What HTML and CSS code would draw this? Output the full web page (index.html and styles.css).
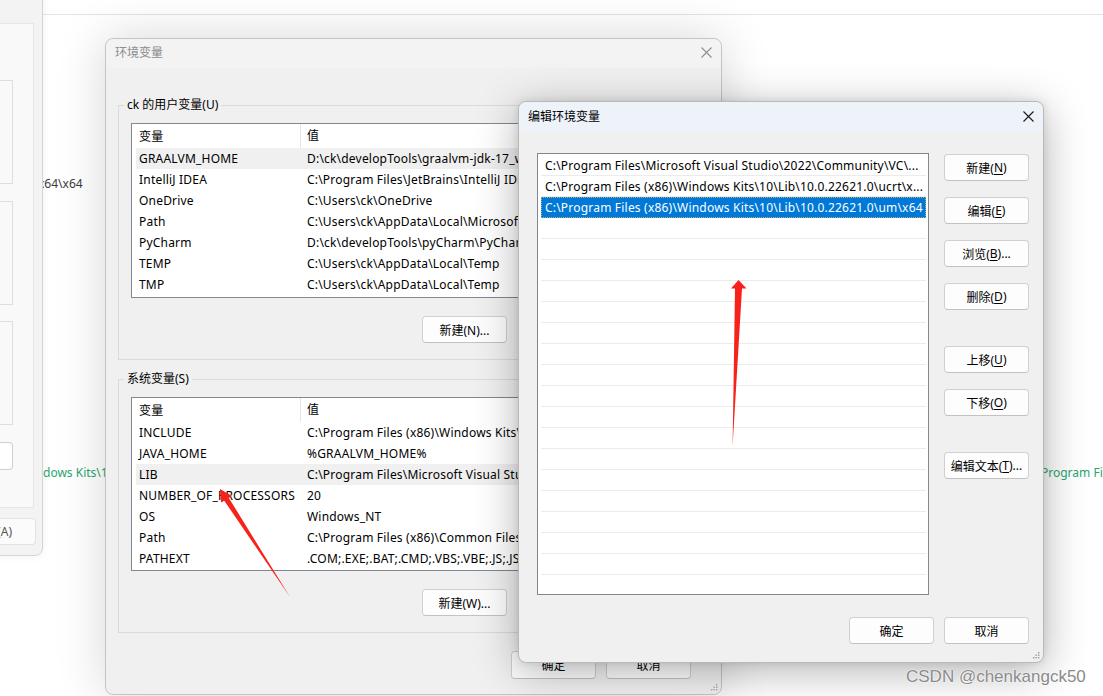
FILE: index.html
```html
<!DOCTYPE html>
<html lang="zh-CN">
<head>
<meta charset="utf-8">
<title>编辑环境变量</title>
<link rel="stylesheet" href="styles.css">
</head>
<body>
<div class="desk">
  <div class="topstrip"></div>
  <span class="bgtext t1">x64\x64</span>
  <span class="bgtext green t2">dows Kits\10.0</span>
  <span class="bgtext green t3">Program Files (x86)</span>

  <div class="win win-left">
    <div class="lw-panel">
      <div class="lw-box"></div>
      <div class="lw-box b2"></div>
      <div class="lw-box b3"></div>
      <div class="lw-btn"></div>
    </div>
    <div class="lw-btn2">(A)</div>
  </div>

  <div class="win win-env">
    <div class="env-title">
      <span>环境变量</span>
      <svg class="xicon" width="11" height="11" viewBox="0 0 11 11"><path d="M0.5 0.5L10.5 10.5M10.5 0.5L0.5 10.5" stroke="#8f8f8f" stroke-width="1.1" fill="none"/></svg>
    </div>
    <div class="env-body">
      <fieldset class="group g1">
        <legend>ck 的用户变量(U)</legend>
        <div class="vlist">
          <div class="vrow head"><span class="c1">变量</span><span class="c2">值</span></div>
          <div class="vrow hl"><span class="c1">GRAALVM_HOME</span><span class="c2">D:\ck\developTools\graalvm-jdk-17_windows-x64_bin\graalvm-jdk-17.0.7+8.1</span></div>
          <div class="vrow"><span class="c1">IntelliJ IDEA</span><span class="c2">C:\Program Files\JetBrains\IntelliJ IDEA 2023.1\bin;</span></div>
          <div class="vrow"><span class="c1">OneDrive</span><span class="c2">C:\Users\ck\OneDrive</span></div>
          <div class="vrow"><span class="c1">Path</span><span class="c2">C:\Users\ck\AppData\Local\Microsoft\WindowsApps;</span></div>
          <div class="vrow"><span class="c1">PyCharm</span><span class="c2">D:\ck\developTools\pyCharm\PyCharm 2023.1\bin;</span></div>
          <div class="vrow"><span class="c1">TEMP</span><span class="c2">C:\Users\ck\AppData\Local\Temp</span></div>
          <div class="vrow"><span class="c1">TMP</span><span class="c2">C:\Users\ck\AppData\Local\Temp</span></div>
        </div>
        <div class="btnrow">
          <button class="btn">新建(N)...</button>
          <button class="btn">编辑(E)...</button>
          <button class="btn">删除(D)</button>
        </div>
      </fieldset>
      <fieldset class="group g2">
        <legend>系统变量(S)</legend>
        <div class="vlist">
          <div class="vrow head"><span class="c1">变量</span><span class="c2">值</span></div>
          <div class="vrow"><span class="c1">INCLUDE</span><span class="c2">C:\Program Files (x86)\Windows Kits\10\Include\10.0.22621.0\ucrt</span></div>
          <div class="vrow"><span class="c1">JAVA_HOME</span><span class="c2">%GRAALVM_HOME%</span></div>
          <div class="vrow hl"><span class="c1">LIB</span><span class="c2">C:\Program Files\Microsoft Visual Studio\2022\Community\VC</span></div>
          <div class="vrow"><span class="c1">NUMBER_OF_PROCESSORS</span><span class="c2">20</span></div>
          <div class="vrow"><span class="c1">OS</span><span class="c2">Windows_NT</span></div>
          <div class="vrow"><span class="c1">Path</span><span class="c2">C:\Program Files (x86)\Common Files\Oracle\Java\javapath;</span></div>
          <div class="vrow"><span class="c1">PATHEXT</span><span class="c2">.COM;.EXE;.BAT;.CMD;.VBS;.VBE;.JS;.JSE;.WSF;.WSH;.MSC</span></div>
        </div>
        <div class="btnrow">
          <button class="btn">新建(W)...</button>
          <button class="btn">编辑(I)...</button>
          <button class="btn">删除(L)</button>
        </div>
      </fieldset>
      <div class="okrow">
        <button class="btn">确定</button>
        <button class="btn">取消</button>
      </div>
    </div>
    <svg class="grip" width="7" height="7" viewBox="0 0 7 7"><g fill="#a8a8a8"><rect x="5" y="0" width="1.4" height="1.4"/><rect x="2.5" y="2.5" width="1.4" height="1.4"/><rect x="5" y="2.5" width="1.4" height="1.4"/><rect x="0" y="5" width="1.4" height="1.4"/><rect x="2.5" y="5" width="1.4" height="1.4"/><rect x="5" y="5" width="1.4" height="1.4"/></g></svg>
  </div>

  <div class="win win-edit">
    <div class="edit-title">
      <span>编辑环境变量</span>
      <svg class="xicon" width="11" height="11" viewBox="0 0 11 11"><path d="M0.5 0.5L10.5 10.5M10.5 0.5L0.5 10.5" stroke="#1a1a1a" stroke-width="1.1" fill="none"/></svg>
    </div>
    <div class="edit-body">
      <div class="edit-main">
        <div class="plist">
          <div class="prow">C:\Program Files\Microsoft Visual Studio\2022\Community\VC\...</div>
          <div class="prow">C:\Program Files (x86)\Windows Kits\10\Lib\10.0.22621.0\ucrt\x...</div>
          <div class="prow sel">C:\Program Files (x86)\Windows Kits\10\Lib\10.0.22621.0\um\x64</div>
          <div class="prow"></div><div class="prow"></div><div class="prow"></div>
          <div class="prow"></div><div class="prow"></div><div class="prow"></div>
          <div class="prow"></div><div class="prow"></div><div class="prow"></div>
          <div class="prow"></div><div class="prow"></div><div class="prow"></div>
          <div class="prow"></div><div class="prow"></div><div class="prow"></div>
          <div class="prow"></div><div class="prow"></div><div class="prow"></div>
        </div>
        <div class="sidebtns">
          <button class="btn">新建(<u>N</u>)</button>
          <button class="btn">编辑(<u>E</u>)</button>
          <button class="btn">浏览(<u>B</u>)...</button>
          <button class="btn">删除(<u>D</u>)</button>
          <button class="btn sp">上移(<u>U</u>)</button>
          <button class="btn">下移(<u>O</u>)</button>
          <button class="btn sp">编辑文本(<u>T</u>)...</button>
        </div>
      </div>
      <div class="okrow2">
        <button class="btn">确定</button>
        <button class="btn">取消</button>
      </div>
    </div>
    <svg class="grip" width="7" height="7" viewBox="0 0 7 7"><g fill="#9a9a9a"><rect x="5" y="0" width="1.4" height="1.4"/><rect x="2.5" y="2.5" width="1.4" height="1.4"/><rect x="5" y="2.5" width="1.4" height="1.4"/><rect x="0" y="5" width="1.4" height="1.4"/><rect x="2.5" y="5" width="1.4" height="1.4"/><rect x="5" y="5" width="1.4" height="1.4"/></g></svg>
  </div>

  <svg class="arrows" width="1103" height="696" viewBox="0 0 1103 696">
    <polygon points="220,489 232,496 228.8,497.9 290,597 224.3,500.7 221,502.6" fill="#f7231a"/>
    <polygon points="738.5,280 746.5,288.5 742,288.5 732.6,446 735,288.5 731,288.5" fill="#f7231a"/>
  </svg>

  <div class="watermark">CSDN @chenkangck50</div>
</div>
</body>
</html>
```
FILE: styles.css
```css
* { box-sizing: border-box; }
html, body { margin: 0; padding: 0; }
body {
  width: 1103px;
  height: 696px;
  overflow: hidden;
  background: #ffffff;
  font-family: "Noto Sans", "Noto Sans CJK SC", sans-serif;
  font-size: 12px;
  letter-spacing: 0.2px;
  color: #000;
}
.desk { position: relative; width: 1103px; height: 696px; overflow: hidden; }

.topstrip {
  position: absolute; left: 0; top: 0; width: 1103px; height: 15px;
  border-bottom: 1px solid #e3e3e3; background: #fff;
}

.bgtext { position: absolute; font-size: 12px; line-height: 16px; color: #3c3c3c; white-space: nowrap; letter-spacing: 0; }
.bgtext.green { color: #2aa56f; }
.t1 { left: 38px; top: 176px; }
.t2 { left: 43px; top: 465px; }
.t3 { left: 1041px; top: 465px; }

.win { position: absolute; }

/* left background window */
.win-left {
  left: -12px; top: -12px; width: 55px; height: 568px;
  background: #f3f3f3;
  border: 1px solid #d4d4d4;
  border-radius: 0 0 8px 0;
  box-shadow: 0 0 10px rgba(0,0,0,0.06);
  display: flex; flex-direction: column;
  padding-top: 34px;
}
.lw-panel {
  width: 45px; height: 485px;
  background: #f9f9f9;
  border: 1px solid #e6e6e6;
  border-left: none;
  display: flex; flex-direction: column;
  padding-top: 56px;
}
.lw-box { width: 24px; height: 104px; border: 1px solid #dedede; border-left: none; background: #f9f9f9; }
.lw-box.b2 { margin-top: 17px; }
.lw-box.b3 { margin-top: 16px; }
.lw-btn { width: 24px; height: 28px; margin-top: 17px; background: #fff; border: 1px solid #d0d0d0; border-left: none; border-radius: 0 4px 4px 0; }
.lw-btn2 {
  width: 47px; height: 27px; margin-top: 10px;
  background: #fbfbfb; border: 1px solid #e2e2e2; border-left: none; border-radius: 0 4px 4px 0;
  display: flex; align-items: center; justify-content: flex-end; padding-right: 23px;
  color: #555; font-size: 12px; letter-spacing: 0;
}

/* environment window */
.win-env {
  left: 105px; top: 38px; width: 617px; height: 657px;
  background: #f0f0f0;
  border: 1px solid #c4c4c4;
  border-radius: 8px;
  box-shadow: 0 0 50px rgba(0,0,0,0.16);
  display: flex; flex-direction: column;
}
.env-title {
  height: 29px; flex: none;
  background: #f3f3f3;
  border-radius: 8px 8px 0 0;
  display: flex; align-items: center; justify-content: space-between;
  padding: 0 9px 3px 9px;
  color: #8c8c8c;
  letter-spacing: 0;
}
.env-body { padding: 28px 12px 0 12px; display: flex; flex-direction: column; }

.group {
  margin: 0; padding: 9px 12px 16px 12px;
  border: 1px solid #dadada;
  min-width: 0;
}
.group legend { padding: 0 3px; margin-left: -7px; line-height: 18px; font-size: 12px; letter-spacing: 0; }
.group.g2 { margin-top: 10px; }

.vlist {
  background: #fff;
  border: 1px solid #828790;
  height: 175px;
  overflow: hidden;
  padding-left: 4px;
}
.g2 .vlist { height: 174px; }
.vrow { display: flex; align-items: center; height: 21px; white-space: nowrap; }
.vrow.head { height: 24px; }
.vrow.hl { background: #f0f0f0; }
.vrow .c1 { width: 164px; flex: none; padding-left: 3px; overflow: hidden; }
.vrow .c2 { padding-left: 7px; flex: 1; overflow: hidden; }
.vrow.head .c2 { border-left: 1px solid #e5e5e5; height: 24px; line-height: 24px; padding-left: 6px; }

.btnrow { display: flex; justify-content: flex-end; gap: 12px; margin-top: 18px; margin-right: -5px; }

.btn {
  width: 85px; height: 27px; padding: 0;
  font-family: inherit; font-size: 12px; color: #000;
  letter-spacing: 0;
  background: #fdfdfd;
  border: 1px solid #d0d0d0;
  border-bottom-color: #c2c2c2;
  border-radius: 4px;
  display: flex; align-items: center; justify-content: center;
  flex: none;
}
.btn u { text-underline-offset: 2px; }

.okrow { display: flex; justify-content: flex-end; gap: 10px; margin-top: 18px; padding-right: 18px; }
.okrow .btn { height: 28px; }

/* edit dialog */
.win-edit {
  left: 518px; top: 101px; width: 526px; height: 562px;
  background: #f0f0f0;
  border: 1px solid #b9b9b9;
  border-radius: 8px;
  box-shadow: 0 8px 44px rgba(0,0,0,0.30), 0 0 8px rgba(0,0,0,0.10);
  display: flex; flex-direction: column;
}
.edit-title {
  height: 29px; flex: none;
  background: #eef2f9;
  border-radius: 8px 8px 0 0;
  display: flex; align-items: center; justify-content: space-between;
  padding: 0 9px 1px 9px;
  letter-spacing: 0;
}
.edit-body { padding: 22px 14px 0 18px; display: flex; flex-direction: column; }
.edit-main { display: flex; gap: 15px; }
.plist {
  width: 392px; height: 442px;
  background: #fff;
  border: 1px solid #828790;
  padding: 1px 2px 0 3px;
  overflow: hidden;
  flex: none;
}
.prow {
  height: 21px; line-height: 18px;
  padding-top: 2px;
  border-bottom: 1px solid #ebebeb;
  padding-left: 4px;
  white-space: nowrap; overflow: hidden;
}
.prow.sel { background: #0078d7; color: #fff; border-bottom-color: #0078d7; outline: 1px dotted rgba(255,200,80,0.7); outline-offset: -1px; }
.sidebtns { display: flex; flex-direction: column; gap: 16px; padding-top: 1px; }
.sidebtns .btn.sp { margin-top: 20px; }
.okrow2 { display: flex; justify-content: flex-end; gap: 10px; margin-top: 22px; }

.grip { position: absolute; right: 3px; bottom: 3px; }

.arrows { position: absolute; left: 0; top: 0; pointer-events: none; }

.watermark {
  position: absolute; left: 906px; top: 667px;
  font-family: "Liberation Sans", Arial, sans-serif;
  font-size: 17px; line-height: 20px;
  letter-spacing: 0;
  color: #8a8a8a;
  text-shadow: 0 0 2px #fff, 0 0 1px #fff;
  white-space: nowrap;
}
```
